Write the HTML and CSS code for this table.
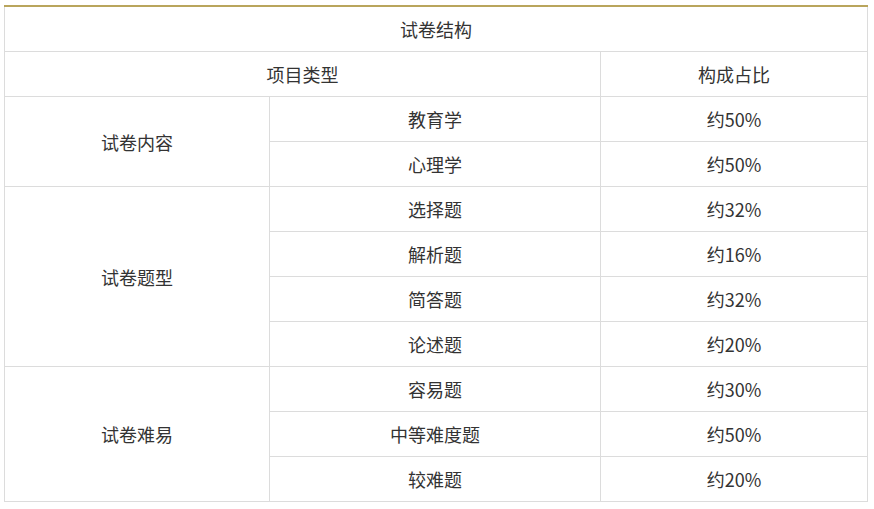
FILE: index.html
```html
<!DOCTYPE html>
<html lang="zh">
<head>
<meta charset="utf-8">
<link rel="stylesheet" href="styles.css">
</head>
<body>
<table class="exam">
  <colgroup><col class="c1"><col class="c2"><col class="c3"></colgroup>
  <tr class="title"><td colspan="3">试卷结构</td></tr>
  <tr><td colspan="2">项目类型</td><td>构成占比</td></tr>
  <tr><td rowspan="2">试卷内容</td><td>教育学</td><td>约50%</td></tr>
  <tr><td>心理学</td><td>约50%</td></tr>
  <tr><td rowspan="4">试卷题型</td><td>选择题</td><td>约32%</td></tr>
  <tr><td>解析题</td><td>约16%</td></tr>
  <tr><td>简答题</td><td>约32%</td></tr>
  <tr><td>论述题</td><td>约20%</td></tr>
  <tr><td rowspan="3">试卷难易</td><td>容易题</td><td>约30%</td></tr>
  <tr><td>中等难度题</td><td>约50%</td></tr>
  <tr><td>较难题</td><td>约20%</td></tr>
</table>
</body>
</html>
```
FILE: styles.css
```css
html, body {
  margin: 0;
  padding: 0;
  background: #fff;
}
body {
  padding: 5px 0 0 4px;
  font-family: "Noto Sans CJK SC", "Noto Sans", sans-serif;
  font-size: 18px;
  color: #333;
}
.exam {
  border-collapse: collapse;
  width: 863px;
  table-layout: fixed;
}
.c1 { width: 265px; }
.c2 { width: 331px; }
.c3 { width: 267px; }
.exam td {
  border: 1px solid #dcdcdc;
  height: 44px;
  padding: 0;
  text-align: center;
  vertical-align: middle;
  line-height: 22px;
}
.exam tr.title td {
  border-top: 2px solid #b9a55c;
  height: 44px;
}
```
